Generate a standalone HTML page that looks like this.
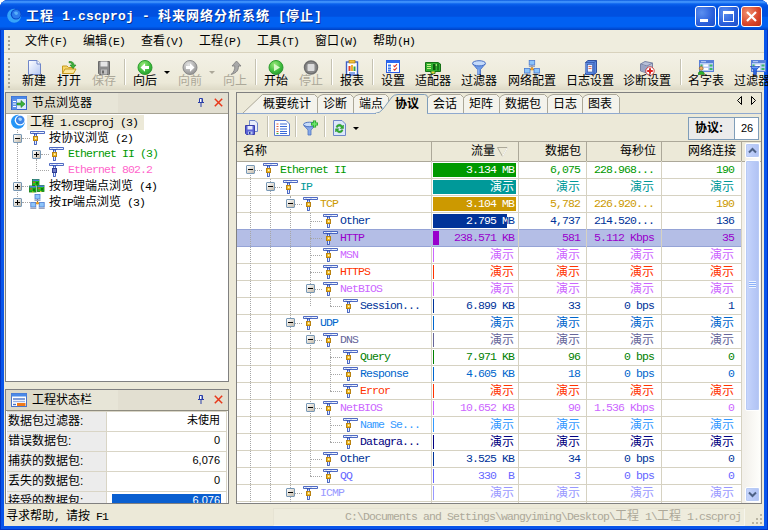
<!DOCTYPE html><html lang="zh"><head><meta charset="utf-8"><title>工程 1.cscproj - 科来网络分析系统 [停止]</title><style>
*{box-sizing:border-box;margin:0;padding:0}
html,body{width:768px;height:530px;overflow:hidden;background:#fff}
body{position:relative;font-family:"Liberation Sans","Noto Sans CJK SC",sans-serif;font-size:12px;color:#000;line-height:1}
.abs{position:absolute}
.m{font-family:"Liberation Mono","Noto Sans CJK SC",monospace;font-size:11.5px;letter-spacing:-0.9px}
.m b,.m span.c{letter-spacing:0}
.c{font-family:"Liberation Sans","Noto Sans CJK SC",sans-serif;font-size:12px;letter-spacing:0}
#win{left:0;top:0;width:768px;height:530px;background:#0855EA;box-shadow:inset 1px 0 0 #0034C4,inset -1px 0 0 #0034C4,inset 0 -1px 0 #0034C4;border-radius:8px 8px 0 0;overflow:hidden}
#title{left:0;top:0;width:768px;height:30px;background:linear-gradient(#0958DF 0,#3D8FFA 5%,#3D8FFA 8%,#0A62EE 13%,#0455E4 20%,#0050E0 24%,#0050E0 54%,#0060F2 58%,#0060F2 88%,#0050DC 94%,#003FBE 100%)}
#ttext{left:26px;top:9px;color:#fff;font-weight:bold;font-size:13px;white-space:pre;text-shadow:1px 1px 0 #0A2F8C;font-family:"Liberation Sans","Noto Sans CJK SC",sans-serif;letter-spacing:1px}
#ttext .l{font-family:"Liberation Mono",monospace;font-size:13px;letter-spacing:0.2px}
.cb{top:6px;width:21px;height:21px;border:1px solid #fff;border-radius:3px;background:radial-gradient(circle at 30% 30%,#5B8FF0,#2A5FDB 60%,#1E4FC8)}
#client{left:4px;top:30px;width:760px;height:496px;background:#ECE9D8}
#menu{left:0;top:0;width:760px;height:23px;background:#EFEDDE;border-bottom:1px solid #D8D2BD}
.mi{top:5px;white-space:pre;font-size:12px}
.grip{width:2px;background-image:repeating-linear-gradient(#A5A292 0,#A5A292 2px,transparent 2px,transparent 4px)}
#tb{left:0;top:23px;width:760px;height:37px;background:linear-gradient(#F3F1E6,#ECE9D8 80%,#DDD9C6)}
.tl{top:22px;white-space:pre;font-size:12px;text-align:center}
.dis{color:#ACA899}
.sep{top:6px;width:2px;height:26px;border-left:1px solid #C5C2B2;border-right:1px solid #fff}
.pane{background:#fff;border:1px solid #808080}
.ph{left:0;top:0;height:20px;background:linear-gradient(90deg,#DDDAC9 0,#DDDAC9 54px,#E7E5D7 54px,#E7E5D7 112px,#E2DFD1 112px,#E2DFD1 100%);width:100%}
.tr{white-space:pre;height:16px;line-height:16px}
.exp{width:9px;height:9px;border:1px solid #7898B5;border-radius:1px;background:linear-gradient(135deg,#fff,#C3BAAA)}
.exp i{position:absolute;left:1px;top:3px;width:5px;height:1px;background:#000}
.exp.p u{position:absolute;left:3px;top:1px;width:1px;height:5px;background:#000}
.dh{border-top:1px dotted #A6A6A6;height:0}
.dv{border-left:1px dotted #A6A6A6;width:0}
.hl{left:0;width:507px;height:1px;background:#D6D2C2}
.vl{top:19px;width:1px;height:343px;background:#D6D2C2}
.cell{white-space:pre;text-align:right;height:16px;line-height:16px}
.hd{top:0;height:20px;background:#ECE9D8;border-right:1px solid #ACA899;border-bottom:1px solid #ACA899;text-align:right;line-height:19px;font-size:12px;padding-right:5px;white-space:pre}
</style></head><body>

<svg width="0" height="0" style="position:absolute">
<defs>
<g id="pi">
 <path d="M0.5 0.5 H14.5 V2.5 H0.5Z" fill="#F0F5FF" stroke="#2446B4" stroke-width="0.8"/>
 <path d="M3 1.5 L5.5 4 L8 1.5" fill="none" stroke="#2446B4" stroke-width="0.7"/>
 <rect x="4.5" y="3" width="2" height="10.5" fill="#E6EEFF" stroke="#2446B4" stroke-width="0.8"/>
 <rect x="3.5" y="5.500" width="4" height="4" fill="#F2BC22" stroke="#B98212"/>
 <rect x="5" y="6.5" width="1.5" height="1.5" fill="#FFF6C8"/>
</g>
<g id="pi2">
 <path d="M0.5 0.5 H14.5 V2.5 H0.5Z" fill="#F0F5FF" stroke="#2446B4" stroke-width="0.8"/>
 <path d="M3 1.5 L5.5 4 L8 1.5" fill="none" stroke="#2446B4" stroke-width="0.7"/>
 <rect x="4.5" y="3" width="2" height="10.5" fill="#E6EEFF" stroke="#2446B4" stroke-width="0.8"/>
 <rect x="3.5" y="5.500" width="4" height="4" fill="#6C79C8" stroke="#2F3C8F"/>
</g>
</defs></svg>

<div id="win" class="abs">
<div id="title" class="abs">
<svg class="abs" style="left:7px;top:8px" width="15" height="15" viewBox="0 0 15 15"><circle cx="7.2" cy="7.8" r="7" fill="#36A4FA"/><circle cx="9" cy="6.3" r="5.300" fill="#0A48C8"/><circle cx="9.2" cy="6.200" r="4.300" fill="#2C7CEC"/><path d="M7 4.500 l1.500 -1 l2 0.500 l0.500 2 l-1.500 1 l-1.500 -0.500z" fill="#58B0FA"/></svg>
<div id="ttext" class="abs">工程<span class="l"> 1.cscproj - </span>科来网络分析系统<span class="l"> [</span>停止<span class="l">]</span></div>
<div class="abs cb" style="left:695px"><div class="abs" style="left:4px;top:12px;width:8px;height:3px;background:#fff"></div></div>
<div class="abs cb" style="left:718px"><div class="abs" style="left:4px;top:4px;width:11px;height:11px;border:1px solid #fff;border-top-width:3px"></div></div>
<div class="abs cb" style="left:741px;background:radial-gradient(circle at 30% 30%,#F09070,#D8452A 60%,#B8301A)"><svg class="abs" style="left:3px;top:3px" width="13" height="13" viewBox="0 0 13 13"><path d="M2 2 L11 11 M11 2 L2 11" stroke="#fff" stroke-width="2.2"/></svg></div>
</div>
<div id="client" class="abs">
<div id="menu" class="abs">
<div class="abs grip" style="left:4px;top:6px;height:15px"></div>
<div class="abs mi" style="left:21px"><span class="c">文件</span><span class="m">(F)</span></div>
<div class="abs mi" style="left:79px"><span class="c">编辑</span><span class="m">(E)</span></div>
<div class="abs mi" style="left:137px"><span class="c">查看</span><span class="m">(V)</span></div>
<div class="abs mi" style="left:195px"><span class="c">工程</span><span class="m">(P)</span></div>
<div class="abs mi" style="left:253px"><span class="c">工具</span><span class="m">(T)</span></div>
<div class="abs mi" style="left:311px"><span class="c">窗口</span><span class="m">(W)</span></div>
<div class="abs mi" style="left:369px"><span class="c">帮助</span><span class="m">(H)</span></div>
</div>
<div id="tb" class="abs">
<div class="abs grip" style="left:4px;top:5px;height:30px"></div>
<svg width="0" height="0" style="position:absolute"><defs>
<linearGradient id="gnew" x1="0" y1="0" x2="1" y2="1"><stop offset="0" stop-color="#fff"/><stop offset="1" stop-color="#B5C8F5"/></linearGradient>
<radialGradient id="ggreen" cx="0.4" cy="0.3" r="0.8"><stop offset="0" stop-color="#9BEA7A"/><stop offset="0.6" stop-color="#3DBB3D"/><stop offset="1" stop-color="#1F8F2F"/></radialGradient>
<radialGradient id="ggrey" cx="0.4" cy="0.3" r="0.8"><stop offset="0" stop-color="#E4E4E4"/><stop offset="0.6" stop-color="#ABABAB"/><stop offset="1" stop-color="#8A8A8A"/></radialGradient>
</defs></svg>
<svg class="abs" style="left:22px;top:7px" width="16" height="16" viewBox="0 0 16 16"><path d="M2.5 0.5 H11 L14.5 4 V14.5 H2.5Z" fill="url(#gnew)" stroke="#6F86C9"/><path d="M11 0.5 V4 H14.5" fill="#fff" stroke="#6F86C9"/></svg>
<div class="abs tl c" style="left:18px;width:24px">新建</div>
<svg class="abs" style="left:57px;top:7px" width="16" height="16" viewBox="0 0 16 16"><path d="M1.5 6 H6 L7.5 7.5 H12.5 V13.5 H1.5Z" fill="#F7D66A" stroke="#C79A1E"/><path d="M1.5 13.5 L4 9 H15 L12.5 13.5Z" fill="#FBE79A" stroke="#C79A1E"/><path d="M8 1.5 C11 1 13 2.5 13 5 H15 L12 8.5 L9 5 H11 C11 3.5 10 2.5 8 2.8Z" fill="#3DB33D" stroke="#1F7F1F" stroke-width="0.6"/></svg>
<div class="abs tl c" style="left:53px;width:24px">打开</div>
<svg class="abs" style="left:92px;top:7px" width="16" height="16" viewBox="0 0 16 16"><path d="M2.5 1.5 H13.5 V14.5 H3.5 L2.5 13.5Z" fill="#8C8C8C" stroke="#6A6A6A"/><rect x="4.5" y="1.5" width="7" height="5" fill="#E6E6E6"/><rect x="5" y="9.5" width="6" height="5" fill="#BDBDBD"/><rect x="6" y="10.5" width="2" height="3" fill="#6A6A6A"/></svg>
<div class="abs tl c dis" style="left:88px;width:24px">保存</div>
<div class="abs sep" style="left:120px"></div>
<svg class="abs" style="left:133px;top:7px" width="16" height="16" viewBox="0 0 16 16"><circle cx="8" cy="7.5" r="7" fill="url(#ggreen)" stroke="#2E9B2E"/><path d="M3.5 7.5 L8 3.3 V6 H12 V9 H8 V11.7Z" fill="#fff"/></svg>
<div class="abs tl c" style="left:129px;width:24px">向后</div>
<div class="abs" style="left:160px;top:18px;width:0;height:0;border:3px solid transparent;border-top:3px solid #000;border-bottom:0"></div>
<svg class="abs" style="left:178px;top:7px" width="16" height="16" viewBox="0 0 16 16"><circle cx="8" cy="7.5" r="7" fill="url(#ggrey)" stroke="#8A8A8A"/><path d="M12.5 7.5 L8 3.3 V6 H4 V9 H8 V11.7Z" fill="#fff"/></svg>
<div class="abs tl c dis" style="left:174px;width:24px">向前</div>
<div class="abs" style="left:205px;top:18px;width:0;height:0;border:3px solid transparent;border-top:3px solid #ACA899;border-bottom:0"></div>
<svg class="abs" style="left:223px;top:7px" width="16" height="16" viewBox="0 0 16 16"><path d="M9.5 1 L14 6 H11.5 C11.5 10 10 13 4 14.5 C7 12 7.8 9.5 7.8 6 H5Z" fill="#A8A8A8" stroke="#7C7C7C" stroke-width="0.8"/></svg>
<div class="abs tl c dis" style="left:219px;width:24px">向上</div>
<div class="abs sep" style="left:251px"></div>
<svg class="abs" style="left:264px;top:7px" width="16" height="16" viewBox="0 0 16 16"><circle cx="8" cy="7.5" r="7" fill="url(#ggreen)" stroke="#2E9B2E"/><path d="M6 3.7 L12 7.5 L6 11.3Z" fill="#D8F8C8"/></svg>
<div class="abs tl c" style="left:260px;width:24px">开始</div>
<svg class="abs" style="left:299px;top:7px" width="16" height="16" viewBox="0 0 16 16"><circle cx="8" cy="7.5" r="6.5" fill="#8A8A8A" stroke="#6E6E6E" stroke-width="1.5"/><rect x="4.5" y="4" width="7" height="7" rx="1" fill="#DCDCDC"/></svg>
<div class="abs tl c dis" style="left:295px;width:24px">停止</div>
<div class="abs sep" style="left:327px"></div>
<svg class="abs" style="left:340px;top:7px" width="16" height="16" viewBox="0 0 16 16"><rect x="2.5" y="2" width="11" height="13" fill="#fff" stroke="#3A5FC8" stroke-width="1.4"/><path d="M5 13 H11" stroke="#3A6FD8" stroke-width="1.2"/><rect x="5" y="0" width="6" height="3" fill="#F2C23A" stroke="#A67A12" stroke-width="0.7"/><rect x="4.5" y="6" width="2" height="5" fill="#E0402A"/><rect x="7" y="5" width="2" height="6" fill="#F0B030"/><rect x="9.5" y="6.500" width="2" height="4.500" fill="#3DA53D"/></svg>
<div class="abs tl c" style="left:336px;width:24px">报表</div>
<div class="abs sep" style="left:368px"></div>
<svg class="abs" style="left:381px;top:7px" width="16" height="16" viewBox="0 0 16 16"><rect x="1.500" y="0.500" width="13" height="12" fill="#fff" stroke="#2A5AE0"/><rect x="1.500" y="0.500" width="13" height="2.500" fill="#2A6AF0"/><rect x="3" y="4.500" width="3" height="2" fill="#3A7AF0"/><rect x="3" y="7.500" width="3" height="2" fill="#3A7AF0"/><rect x="3" y="10" width="3" height="1.500" fill="#3A7AF0"/><path d="M8.500 5.500 l1.200 1.200 l2.300 -2.500 M8.500 9 l1.200 1.200 l2.300 -2.500" stroke="#E03A2A" fill="none" stroke-width="1.100"/></svg>
<div class="abs tl c" style="left:377px;width:24px">设置</div>
<svg class="abs" style="left:421px;top:7px" width="16" height="16" viewBox="0 0 16 16"><path d="M0.500 2.500 H13 L15.500 4 V11.500 H10 V13.500 H6 V11.500 H0.500Z" fill="#2FB02F" stroke="#147014"/><path d="M2 4.500 H6 M2 6.500 H6 M2 8.500 H6" stroke="#C8F088" stroke-width="1.200"/><rect x="8" y="4" width="2.500" height="6" fill="#0E5A0E"/><rect x="12" y="3.500" width="2" height="7" fill="#1A7A1A"/><rect x="6.500" y="11.500" width="3" height="2" fill="#F0D040"/><circle cx="11.300" cy="5" r="0.800" fill="#E8F8A0"/></svg>
<div class="abs tl c" style="left:411px;width:36px">适配器</div>
<svg class="abs" style="left:467px;top:7px" width="16" height="16" viewBox="0 0 16 16"><path d="M1.800 4 L6.500 9.500 V14.500 H9.500 V9.500 L14.200 4Z" fill="#6F9CE8" stroke="#3A64C0" stroke-width="0.800"/><ellipse cx="8" cy="3.300" rx="6.500" ry="2.600" fill="#C4DAFA" stroke="#3A64C0" stroke-width="0.900"/><path d="M7 9.500 V14" stroke="#B8D0F8" stroke-width="0.900"/></svg>
<div class="abs tl c" style="left:457px;width:36px">过滤器</div>
<svg class="abs" style="left:520px;top:7px" width="16" height="16" viewBox="0 0 16 16"><path d="M8 5 V9 L3.500 11 M8 9 L12.500 11" stroke="#404060" fill="none"/><rect x="5.2" y="0.5" width="5.500" height="4.500" fill="#8CC4FA" stroke="#4A7AD0" stroke-width="0.800"/><path d="M4.9 6.3 h6.100" stroke="#9AA4C0" stroke-width="1.400"/><rect x="0.5" y="8.5" width="5.500" height="4.500" fill="#8CC4FA" stroke="#4A7AD0" stroke-width="0.800"/><path d="M0.2 14.3 h6.100" stroke="#9AA4C0" stroke-width="1.400"/><rect x="10" y="8.5" width="5.500" height="4.500" fill="#8CC4FA" stroke="#4A7AD0" stroke-width="0.800"/><path d="M9.7 14.3 h6.100" stroke="#9AA4C0" stroke-width="1.400"/><circle cx="8" cy="8.800" r="1.600" fill="#F0A020"/></svg>
<div class="abs tl c" style="left:504px;width:48px">网络配置</div>
<svg class="abs" style="left:578px;top:7px" width="16" height="16" viewBox="0 0 16 16"><path d="M3.500 2.500 L6 0.500 H14.500 V12.500 L12 14.500 H3.500Z" fill="#5A88E0" stroke="#2F4FA0"/><path d="M12 2.500 L14.500 0.500 M12 2.500 V14.500 M3.500 2.500 H12" stroke="#2F4FA0" fill="none" stroke-width="0.700"/><rect x="5.500" y="4.500" width="5" height="7.500" fill="#EEF4FF" stroke="#2F4FA0" stroke-width="0.600"/><path d="M6.500 6.500 H9.500 M6.500 8.500 H9.500" stroke="#E05030" stroke-width="0.800"/><path d="M2.500 4 h1.500 M2.500 6 h1.500 M2.500 8 h1.500 M2.500 10 h1.500 M2.500 12 h1.500" stroke="#C8D8F8" stroke-width="0.900"/></svg>
<div class="abs tl c" style="left:562px;width:48px">日志设置</div>
<svg class="abs" style="left:635px;top:7px" width="16" height="16" viewBox="0 0 16 16"><path d="M1.5 4 L6 1.5 L13.5 3 V10 L8 13 L1.5 11Z" fill="#B8C0D8" stroke="#7A84A4"/><path d="M1.5 4 L8 6 L13.5 3 M8 6 V13" stroke="#7A84A4" fill="none"/><path d="M2 4.500 L8 6.500 V12.500 L2 10.700Z" fill="#9AA4C4"/><circle cx="11" cy="11" r="4.2" fill="#fff" stroke="#C02020" stroke-width="0.8"/><path d="M11 8.2 V13.8 M8.2 11 H13.8" stroke="#E02020" stroke-width="2"/></svg>
<div class="abs tl c" style="left:619px;width:48px">诊断设置</div>
<div class="abs sep" style="left:676px"></div>
<svg class="abs" style="left:694px;top:7px" width="16" height="16" viewBox="0 0 16 16"><rect x="1.500" y="0.500" width="14" height="11" fill="#B8CCF2" stroke="#5A80D8"/><rect x="1.500" y="0.500" width="14" height="2.500" fill="#5A80D8"/><path d="M3 1.700 H8" stroke="#DCE8FF" stroke-width="0.800"/><rect x="5.500" y="4.500" width="4.500" height="2" fill="#fff"/><rect x="5.500" y="8" width="4.500" height="2" fill="#fff"/><rect x="11.500" y="4.500" width="3" height="2" fill="#3DB86A"/><rect x="11.500" y="8" width="3" height="2" fill="#3DB86A"/><rect x="2.500" y="4.500" width="2" height="2" fill="#3DB86A"/><circle cx="3.200" cy="8.300" r="1.900" fill="#F0B060" stroke="#8A5A20" stroke-width="0.600"/><path d="M0 14.500 C0 10.200 6.400 10.200 6.400 14.500Z" fill="#2DB32D" stroke="#1C6F1C" stroke-width="0.600"/></svg>
<div class="abs tl c" style="left:684px;width:36px">名字表</div>
<svg class="abs" style="left:746px;top:7px" width="16" height="16" viewBox="0 0 16 16"><rect x="1.500" y="0.500" width="14" height="11" fill="#B8CCF2" stroke="#5A80D8"/><rect x="1.500" y="0.500" width="14" height="2.500" fill="#5A80D8"/><path d="M3 1.700 H8" stroke="#DCE8FF" stroke-width="0.800"/><rect x="5.500" y="4.500" width="4.500" height="2" fill="#fff"/><rect x="5.500" y="8" width="4.500" height="2" fill="#fff"/><rect x="11.500" y="4.500" width="3" height="2" fill="#3DB86A"/><rect x="11.500" y="8" width="3" height="2" fill="#3DB86A"/><rect x="2.500" y="4.500" width="2" height="2" fill="#3DB86A"/><path d="M0.500 6.500 H9.500 L6.300 10 V14.500 H3.700 V10Z" fill="#2F6FE8" stroke="#1C3FB0" stroke-width="0.800"/><path d="M1.500 7.200 H8.500" stroke="#9CC0FF" stroke-width="0.900"/></svg>
<div class="abs tl c" style="left:730px;width:36px">过滤器</div>
</div>
<div class="abs pane" style="left:1px;top:62px;width:224px;height:290px">
<div class="abs ph"></div>
<svg class="abs" style="left:5px;top:3px" width="16" height="14" viewBox="0 0 16 14"><rect x="0.5" y="0.5" width="15" height="13" fill="#DDE9FB" stroke="#3A64C8"/><rect x="0.5" y="0.5" width="15" height="2.5" fill="#4A8AE8"/><rect x="1" y="3" width="5" height="10.500" fill="#5F90E8"/><path d="M2 5.5 H5 M2 8 H5 M2 10.5 H5" stroke="#fff"/><path d="M6 7 H10 V4.5 L14 8 L10 11.5 V9 H6Z" fill="#3DB33D" stroke="#1C7F1C" stroke-width="0.6"/></svg>
<div class="abs c" style="left:26px;top:4px;white-space:pre">节点浏览器</div>
<svg class="abs" style="left:191px;top:4px" width="9" height="11" viewBox="0 0 9 11"><path d="M2.5 1.5 H5.5 V5.5 H2.5Z M1 5.500 H7 M4 6 V10" fill="#fff" stroke="#2B3FA8" stroke-width="1"/><path d="M5 2 V5" stroke="#2B3FA8"/></svg>
<svg class="abs" style="left:208px;top:5px" width="9" height="9" viewBox="0 0 9 9"><path d="M0.8 0.8 L8.2 8.2 M8.2 0.8 L0.8 8.2" stroke="#E8381A" stroke-width="1.5"/></svg>
<div class="abs" style="left:21px;top:22px;width:117px;height:15px;background:#ECE9D8"></div>
<svg class="abs" style="left:5px;top:21px" width="15" height="15" viewBox="0 0 15 15"><circle cx="7" cy="7.800" r="7" fill="#2496F8"/><circle cx="9" cy="6.200" r="5.300" fill="#fff"/><circle cx="9.200" cy="6" r="4.300" fill="#3C86E8"/><path d="M7 4.500 l1.500 -1 l2 0.500 l0.500 2 l-1.500 1 l-1.500 -0.500z" fill="#A8D4FA"/></svg>
<div class="abs dv" style="left:11px;top:37px;height:5px"></div>
<div class="abs" style="left:0;top:20px;width:222px;height:1px;background:#A5A293"></div>
<div class="abs tr" style="left:24px;top:21px"><span class="c">工程</span><span class="m"> 1.cscproj (3)</span></div>
<div class="abs dv" style="left:11px;top:50px;height:60px"></div>
<div class="abs dv" style="left:30px;top:66px;height:12px"></div>
<div class="abs dh" style="left:16px;top:45px;width:8px"></div>
<div class="abs dh" style="left:16px;top:93px;width:8px"></div>
<div class="abs dh" style="left:16px;top:109px;width:8px"></div>
<div class="abs dh" style="left:35px;top:61px;width:8px"></div>
<div class="abs dh" style="left:30px;top:77px;width:13px"></div>
<div class="abs exp" style="left:7px;top:41px"><i></i></div>
<svg class="abs" style="left:24px;top:38px" width="15" height="14" viewBox="0 0 15 14"><use href="#pi"/></svg>
<div class="abs tr" style="left:43px;top:37px"><span class="c">按协议浏览</span><span class="m"> (2)</span></div>
<div class="abs exp p" style="left:26px;top:57px"><i></i><u></u></div>
<svg class="abs" style="left:43px;top:54px" width="15" height="14" viewBox="0 0 15 14"><use href="#pi"/></svg>
<div class="abs tr m" style="left:62px;top:53px;color:#009900">Ethernet II (3)</div>
<svg class="abs" style="left:43px;top:70px" width="15" height="14" viewBox="0 0 15 14"><use href="#pi2"/></svg>
<div class="abs tr m" style="left:62px;top:69px;color:#FF66CC">Ethernet 802.2</div>
<div class="abs exp p" style="left:7px;top:89px"><i></i><u></u></div>
<svg class="abs" style="left:23px;top:86px" width="16" height="15" viewBox="0 0 16 15"><rect x="3.5" y="0.5" width="6.500" height="6" fill="#22C022" stroke="#0E7A0E" stroke-width="0.800"/><rect x="3.5" y="0.5" width="6.500" height="1.500" fill="#4A7AE0"/><rect x="4.3" y="2.7" width="1.600" height="1.400" fill="#F04030"/><rect x="7.0" y="3.0" width="2" height="2.500" fill="#0E7A0E"/><rect x="6.0" y="6.1" width="1.500" height="1" fill="#F0E040"/><rect x="0.5" y="7" width="6.500" height="6" fill="#22C022" stroke="#0E7A0E" stroke-width="0.800"/><rect x="0.5" y="7" width="6.500" height="1.500" fill="#4A7AE0"/><rect x="1.3" y="9.2" width="1.600" height="1.400" fill="#F04030"/><rect x="4.0" y="9.5" width="2" height="2.500" fill="#0E7A0E"/><rect x="3.0" y="12.6" width="1.500" height="1" fill="#F0E040"/><rect x="8.5" y="6.5" width="6.500" height="6" fill="#22C022" stroke="#0E7A0E" stroke-width="0.800"/><rect x="8.5" y="6.5" width="6.500" height="1.500" fill="#4A7AE0"/><rect x="9.3" y="8.7" width="1.600" height="1.400" fill="#F04030"/><rect x="12.0" y="9.0" width="2" height="2.500" fill="#0E7A0E"/><rect x="11.0" y="12.1" width="1.500" height="1" fill="#F0E040"/></svg>
<div class="abs tr" style="left:43px;top:85px"><span class="c">按物理端点浏览</span><span class="m"> (4)</span></div>
<div class="abs exp p" style="left:7px;top:105px"><i></i><u></u></div>
<svg class="abs" style="left:24px;top:101px" width="16" height="16" viewBox="0 0 16 16"><path d="M7.500 5 V9 L3.500 11 M7.500 9 L11.500 11" stroke="#404060" fill="none"/><rect x="5" y="0.5" width="5" height="4.500" fill="#8CC4FA" stroke="#4A7AD0" stroke-width="0.800"/><path d="M4.5 6.3 h6" stroke="#9AA4C0" stroke-width="1.400"/><rect x="0.8" y="8.5" width="5" height="4.500" fill="#8CC4FA" stroke="#4A7AD0" stroke-width="0.800"/><path d="M0.30000000000000004 14.3 h6" stroke="#9AA4C0" stroke-width="1.400"/><rect x="9.2" y="8.5" width="5" height="4.500" fill="#8CC4FA" stroke="#4A7AD0" stroke-width="0.800"/><path d="M8.7 14.3 h6" stroke="#9AA4C0" stroke-width="1.400"/><circle cx="7.500" cy="9" r="1.500" fill="#F0A020"/></svg>
<div class="abs tr" style="left:43px;top:101px"><span class="c">按</span><span class="m">IP</span><span class="c">端点浏览</span><span class="m"> (3)</span></div>
</div>
<div class="abs pane" style="left:1px;top:359px;width:224px;height:115px;overflow:hidden">
<div class="abs ph"></div>
<svg class="abs" style="left:5px;top:3px" width="16" height="14" viewBox="0 0 16 14"><rect x="0.5" y="0.5" width="15" height="13" fill="#fff" stroke="#4A74C8"/><rect x="0.5" y="0.5" width="15" height="3" fill="#4A8AE8"/><path d="M2 6 H14" stroke="#4A74C8" stroke-width="1.4"/><path d="M2 8.5 H14" stroke="#9AB4E8" stroke-width="1.4"/><rect x="6" y="10" width="8.5" height="3" fill="#F07A1A"/><path d="M2 11.5 H5" stroke="#4A74C8" stroke-width="1.4"/></svg>
<div class="abs c" style="left:26px;top:4px;white-space:pre">工程状态栏</div>
<svg class="abs" style="left:191px;top:4px" width="9" height="11" viewBox="0 0 9 11"><path d="M2.5 1.5 H5.5 V5.5 H2.5Z M1 5.500 H7 M4 6 V10" fill="#fff" stroke="#2B3FA8" stroke-width="1"/><path d="M5 2 V5" stroke="#2B3FA8"/></svg>
<svg class="abs" style="left:208px;top:5px" width="9" height="9" viewBox="0 0 9 9"><path d="M0.8 0.8 L8.2 8.2 M8.2 0.8 L0.8 8.2" stroke="#E8381A" stroke-width="1.5"/></svg>
<div class="abs" style="left:0;top:20px;width:222px;height:95px;background:#fff"></div><div class="abs" style="left:0;top:20px;width:222px;height:1px;background:#8F8C7F"></div><div class="abs" style="left:1px;top:21px;width:220px;height:95px;background:#D9D5C6"></div>
<div class="abs" style="left:1px;top:22px;width:99px;height:19px;background:#ECECEC"></div>
<div class="abs c" style="left:2px;top:25px;white-space:pre">数据包过滤器<span style="font-family:'Liberation Sans',sans-serif">:</span></div>
<div class="abs" style="left:101px;top:22px;width:119px;height:19px;background:#fff"></div>
<div class="abs" style="left:101px;top:25px;width:113px;text-align:right;white-space:pre;color:#000;font-size:11px;font-family:'Liberation Sans','Noto Sans CJK SC',sans-serif">未使用</div>
<div class="abs" style="left:1px;top:42px;width:99px;height:19px;background:#ECECEC"></div>
<div class="abs c" style="left:2px;top:45px;white-space:pre">错误数据包<span style="font-family:'Liberation Sans',sans-serif">:</span></div>
<div class="abs" style="left:101px;top:42px;width:119px;height:19px;background:#fff"></div>
<div class="abs" style="left:101px;top:45px;width:113px;text-align:right;white-space:pre;color:#000;font-size:11px;font-family:'Liberation Sans','Noto Sans CJK SC',sans-serif">0</div>
<div class="abs" style="left:1px;top:62px;width:99px;height:19px;background:#ECECEC"></div>
<div class="abs c" style="left:2px;top:65px;white-space:pre">捕获的数据包<span style="font-family:'Liberation Sans',sans-serif">:</span></div>
<div class="abs" style="left:101px;top:62px;width:119px;height:19px;background:#fff"></div>
<div class="abs" style="left:101px;top:65px;width:113px;text-align:right;white-space:pre;color:#000;font-size:11px;font-family:'Liberation Sans','Noto Sans CJK SC',sans-serif">6,076</div>
<div class="abs" style="left:1px;top:82px;width:99px;height:19px;background:#ECECEC"></div>
<div class="abs c" style="left:2px;top:85px;white-space:pre">丢失的数据包<span style="font-family:'Liberation Sans',sans-serif">:</span></div>
<div class="abs" style="left:101px;top:82px;width:119px;height:19px;background:#fff"></div>
<div class="abs" style="left:101px;top:85px;width:113px;text-align:right;white-space:pre;color:#000;font-size:11px;font-family:'Liberation Sans','Noto Sans CJK SC',sans-serif">0</div>
<div class="abs" style="left:1px;top:102px;width:99px;height:19px;background:#ECECEC"></div>
<div class="abs c" style="left:2px;top:105px;white-space:pre">接受的数据包<span style="font-family:'Liberation Sans',sans-serif">:</span></div>
<div class="abs" style="left:101px;top:102px;width:119px;height:19px;background:#fff"></div>
<div class="abs" style="left:106px;top:104px;width:109px;height:17px;background:#0A5FD0"></div>
<div class="abs" style="left:101px;top:105px;width:113px;text-align:right;white-space:pre;color:#fff;font-size:11px;font-family:'Liberation Sans','Noto Sans CJK SC',sans-serif">6,076</div>
</div>
<div class="abs pane" style="left:232px;top:62px;width:526px;height:412px;background:#ECE9D8;overflow:hidden">
<div class="abs" style="left:0;top:20px;width:524px;height:1px;background:#7F9DB9"></div>
<svg class="abs" style="left:0;top:0" width="524" height="22" viewBox="0 0 524 22">
<path d="M5.5 20.5 L25.5 1.5 H77.5 L80.5 4.5 V20.5Z" fill="#F4F3EC" stroke="#ACA899"/>
<path d="M80.5 20.5 V5.5 Q82 2 86 1.5 H113.5 L116.5 4.5 V20.5Z" fill="#F4F3EC" stroke="#ACA899"/>
<path d="M116.5 20.5 V5.5 Q118 2 122 1.5 H148.5 L151.5 4.5 V20.5Z" fill="#F4F3EC" stroke="#ACA899"/>
<path d="M190.5 20.5 V5.5 Q192 2 196 1.5 H223.5 L226.5 4.5 V20.5Z" fill="#F4F3EC" stroke="#ACA899"/>
<path d="M226.5 20.5 V5.5 Q228 2 232 1.5 H259.5 L262.5 4.5 V20.5Z" fill="#F4F3EC" stroke="#ACA899"/>
<path d="M262.5 20.5 V5.5 Q264 2 268 1.5 H307.5 L310.5 4.5 V20.5Z" fill="#F4F3EC" stroke="#ACA899"/>
<path d="M310.5 20.5 V5.5 Q312 2 316 1.5 H342.5 L345.5 4.5 V20.5Z" fill="#F4F3EC" stroke="#ACA899"/>
<path d="M345.5 20.5 V5.5 Q347 2 351 1.5 H379.5 L382.5 4.5 V20.5Z" fill="#F4F3EC" stroke="#ACA899"/>
<path d="M0 20.5 H524" stroke="#8FA9CF"/>
<path d="M138 20.5 Q143 20 146 16 L155 4 Q157 1.5 161 1.5 H187.5 Q190.5 1.5 190.5 4.5 V20.5" fill="#ECE9D8" stroke="#7F9DB9"/>
<rect x="139" y="20" width="51" height="2" fill="#ECE9D8"/>
<path d="M504.5 3.5 V11.5 L500.5 7.5Z M514.500 3.5 V11.5 L518.500 7.5Z" fill="none" stroke="#000" stroke-width="1"/>
</svg>
<div class="abs c" style="left:26px;top:5px;white-space:pre">概要统计</div>
<div class="abs c" style="left:86px;top:5px;white-space:pre">诊断</div>
<div class="abs c" style="left:122px;top:5px;white-space:pre">端点</div>
<div class="abs c" style="left:196px;top:5px;white-space:pre">会话</div>
<div class="abs c" style="left:232px;top:5px;white-space:pre">矩阵</div>
<div class="abs c" style="left:268px;top:5px;white-space:pre">数据包</div>
<div class="abs c" style="left:316px;top:5px;white-space:pre">日志</div>
<div class="abs c" style="left:351px;top:5px;white-space:pre">图表</div>
<div class="abs c" style="left:158px;top:5px;white-space:pre;font-weight:bold">协议</div>
<svg class="abs" style="left:7px;top:27px" width="16" height="16" viewBox="0 0 16 16"><path d="M5.5 0.5 H11 L13.500 3 V11.500 H5.5Z" fill="#E8EEFC" stroke="#6F86C9"/><path d="M1.5 5.500 H10.500 V14.500 H2.500 L1.5 13.500Z" fill="#5B63D6" stroke="#3A3FA8"/><rect x="3.500" y="6" width="5" height="3.500" fill="#E6ECFA"/><rect x="4" y="11.500" width="4.500" height="3" fill="#B8C4EE"/><rect x="5" y="12" width="1.500" height="2" fill="#2A3F98"/></svg>
<svg class="abs" style="left:37px;top:27px" width="16" height="16" viewBox="0 0 16 16"><path d="M0.500 0.500 H12 L15.500 4 V15.500 H0.500Z" fill="#fff" stroke="#5A7ACF"/><path d="M2.500 4 H4.500 M2.500 6.500 H4.500 M2.500 9 H4.500 M2.500 11.500 H4.500" stroke="#E0603A" stroke-width="1.200"/><path d="M2.500 13.500 H4.500" stroke="#3DA53D" stroke-width="1.200"/><path d="M6 4 H13 M6 6.500 H13 M6 9 H13 M6 11.500 H13 M6 13.500 H13" stroke="#3A6AD8" stroke-width="1.200"/></svg>
<svg class="abs" style="left:66px;top:27px" width="16" height="16" viewBox="0 0 16 16"><ellipse cx="6.500" cy="4.500" rx="6" ry="2.300" fill="#C8DCF8" stroke="#4F74C0"/><path d="M0.800 5.500 L5 10 V15 H8 V10 L12.200 5.500 C10 7.300 3 7.300 0.800 5.500Z" fill="#86A8E8" stroke="#4F74C0" stroke-width="0.800"/><path d="M11.500 0.500 V7.500 M8 4 H15" stroke="#22A022" stroke-width="3.200"/><path d="M11.500 1.200 V6.800 M8.700 4 H14.300" stroke="#6FE86F" stroke-width="1.600"/></svg>
<svg class="abs" style="left:95px;top:27px" width="16" height="16" viewBox="0 0 16 16"><path d="M1.500 0.500 H10 L13.500 4 V15.500 H1.500Z" fill="#DCE8FA" stroke="#6F86C9"/><path d="M4 7 A3.500 3.500 0 0 1 10.500 6 L11.500 5 V8.500 H8 L9.200 7.300 A2 2 0 0 0 5.500 7.500Z M11 10 A3.500 3.500 0 0 1 4.500 11 L3.500 12 V8.800 H7 L5.800 10 A2 2 0 0 0 9.500 9.700Z" fill="#2FAF2F" stroke="#1C7F1C" stroke-width="0.400"/></svg>
<div class="abs" style="left:30px;top:23px;width:2px;height:21px;border-left:1px solid #C5C2B2;border-right:1px solid #fff"></div>
<div class="abs" style="left:58px;top:23px;width:2px;height:21px;border-left:1px solid #C5C2B2;border-right:1px solid #fff"></div>
<div class="abs" style="left:87px;top:23px;width:2px;height:21px;border-left:1px solid #C5C2B2;border-right:1px solid #fff"></div>
<div class="abs" style="left:116px;top:34px;width:0;height:0;border:3px solid transparent;border-top:3px solid #000;border-bottom:0"></div>
<div class="abs" style="left:451px;top:24px;width:71px;height:23px;border:1px solid #7F9DB9;background:#fff"><div class="abs" style="left:0;top:0;width:46px;height:21px;background:#EBEBEB;border-right:1px solid #7F9DB9"></div><div class="abs c" style="left:6px;top:4px;font-weight:bold;white-space:pre">协议:</div><div class="abs" style="left:52px;top:5px;font-size:11px">26</div></div>
<div class="abs" style="left:0;top:48px;width:524px;height:362px;background:#fff;border-top:1px solid #ACA899">
<div class="abs hd c" style="left:0px;width:195px;text-align:left;padding-left:6px">名称</div>
<div class="abs hd c" style="left:195px;width:87px;padding-right:23px">流量</div>
<svg class="abs" style="left:260px;top:5px" width="11" height="10" viewBox="0 0 11 10"><path d="M0.5 0.5 H10.5 L5.5 9.5Z" fill="#ECE9D8" stroke="#ACA899"/><path d="M10.5 0.5 L5.5 9.5" stroke="#fff"/></svg>
<div class="abs hd c" style="left:282px;width:68px">数据包</div>
<div class="abs hd c" style="left:350px;width:75px">每秒位</div>
<div class="abs hd c" style="left:425px;width:80px">网络连接</div>
<div class="abs hd" style="left:505px;width:19px;border-right:0"></div>
<div class="abs hl" style="top:36px"></div>
<div class="abs hl" style="top:53px"></div>
<div class="abs hl" style="top:70px"></div>
<div class="abs hl" style="top:87px"></div>
<div class="abs" style="left:0;top:87px;width:505px;height:18px;background:#B4BEE6;border-top:1px solid #95A3D6;border-bottom:1px solid #95A3D6"></div>
<div class="abs hl" style="top:121px"></div>
<div class="abs hl" style="top:138px"></div>
<div class="abs hl" style="top:155px"></div>
<div class="abs hl" style="top:172px"></div>
<div class="abs hl" style="top:189px"></div>
<div class="abs hl" style="top:206px"></div>
<div class="abs hl" style="top:223px"></div>
<div class="abs hl" style="top:240px"></div>
<div class="abs hl" style="top:257px"></div>
<div class="abs hl" style="top:274px"></div>
<div class="abs hl" style="top:291px"></div>
<div class="abs hl" style="top:308px"></div>
<div class="abs hl" style="top:325px"></div>
<div class="abs hl" style="top:342px"></div>
<div class="abs hl" style="top:359px"></div>
<div class="abs vl" style="left:194px"></div>
<div class="abs vl" style="left:281px"></div>
<div class="abs vl" style="left:349px"></div>
<div class="abs vl" style="left:424px"></div>
<div class="abs vl" style="left:504px"></div>
<div class="abs" style="left:194px;top:88px;width:1px;height:16px;background:#B4BEE6"></div>
<div class="abs dv" style="left:13px;top:33px;height:329px"></div>
<div class="abs dv" style="left:33px;top:37px;height:325px"></div>
<div class="abs dv" style="left:53px;top:54px;height:308px"></div>
<div class="abs dv" style="left:73px;top:71px;height:93px"></div>
<div class="abs dv" style="left:73px;top:190px;height:144px"></div>
<div class="abs dv" style="left:93px;top:156px;height:8px"></div>
<div class="abs dv" style="left:93px;top:207px;height:42px"></div>
<div class="abs dv" style="left:93px;top:275px;height:25px"></div>
<div class="abs dh" style="left:18px;top:28px;width:7px"></div>
<div class="abs exp" style="left:9px;top:23px"><i></i></div>
<svg class="abs" style="left:26px;top:21px" width="15" height="14" viewBox="0 0 15 14"><use href="#pi"/></svg>
<div class="abs cell m" style="left:43px;top:20px;text-align:left;color:#009900">Ethernet II</div>
<div class="abs cell m" style="left:196px;top:20px;width:81px;color:#009900">3.134 MB</div>
<div class="abs" style="left:196px;top:21px;width:83px;height:14px;background:#009900;overflow:hidden"><div class="abs cell m" style="left:0;top:-1px;width:81px;color:#fff">3.134 MB</div></div>
<div class="abs cell m" style="left:282px;top:20px;width:61px;color:#009900">6,075</div>
<div class="abs cell m" style="left:350px;top:20px;width:67px;color:#009900">228.968...</div>
<div class="abs cell m" style="left:425px;top:20px;width:72px;color:#009900">190</div>
<div class="abs dh" style="left:38px;top:45px;width:7px"></div>
<div class="abs exp" style="left:29px;top:40px"><i></i></div>
<svg class="abs" style="left:46px;top:38px" width="15" height="14" viewBox="0 0 15 14"><use href="#pi"/></svg>
<div class="abs cell m" style="left:63px;top:37px;text-align:left;color:#009999">IP</div>
<div class="abs cell m" style="left:196px;top:37px;width:81px;color:#009999"><span class="c">演示</span></div>
<div class="abs" style="left:196px;top:38px;width:83px;height:14px;background:#009999;overflow:hidden"><div class="abs cell m" style="left:0;top:-1px;width:81px;color:#fff"><span class="c">演示</span></div></div>
<div class="abs cell m" style="left:282px;top:37px;width:61px;color:#009999"><span class="c">演示</span></div>
<div class="abs cell m" style="left:350px;top:37px;width:67px;color:#009999"><span class="c">演示</span></div>
<div class="abs cell m" style="left:425px;top:37px;width:72px;color:#009999"><span class="c">演示</span></div>
<div class="abs dh" style="left:58px;top:62px;width:7px"></div>
<div class="abs exp" style="left:49px;top:57px"><i></i></div>
<svg class="abs" style="left:66px;top:55px" width="15" height="14" viewBox="0 0 15 14"><use href="#pi"/></svg>
<div class="abs cell m" style="left:83px;top:54px;text-align:left;color:#CC9900">TCP</div>
<div class="abs cell m" style="left:196px;top:54px;width:81px;color:#CC9900">3.104 MB</div>
<div class="abs" style="left:196px;top:55px;width:83px;height:14px;background:#CC9900;overflow:hidden"><div class="abs cell m" style="left:0;top:-1px;width:81px;color:#fff">3.104 MB</div></div>
<div class="abs cell m" style="left:282px;top:54px;width:61px;color:#CC9900">5,782</div>
<div class="abs cell m" style="left:350px;top:54px;width:67px;color:#CC9900">226.920...</div>
<div class="abs cell m" style="left:425px;top:54px;width:72px;color:#CC9900">190</div>
<div class="abs dh" style="left:73px;top:79px;width:12px"></div>
<svg class="abs" style="left:86px;top:72px" width="15" height="14" viewBox="0 0 15 14"><use href="#pi"/></svg>
<div class="abs cell m" style="left:103px;top:71px;text-align:left;color:#003399">Other</div>
<div class="abs cell m" style="left:196px;top:71px;width:81px;color:#003399">2.795 MB</div>
<div class="abs" style="left:196px;top:72px;width:74px;height:14px;background:#003399;overflow:hidden"><div class="abs cell m" style="left:0;top:-1px;width:81px;color:#fff">2.795 MB</div></div>
<div class="abs cell m" style="left:282px;top:71px;width:61px;color:#003399">4,737</div>
<div class="abs cell m" style="left:350px;top:71px;width:67px;color:#003399">214.520...</div>
<div class="abs cell m" style="left:425px;top:71px;width:72px;color:#003399">136</div>
<div class="abs dh" style="left:73px;top:96px;width:12px"></div>
<svg class="abs" style="left:86px;top:89px" width="15" height="14" viewBox="0 0 15 14"><use href="#pi"/></svg>
<div class="abs cell m" style="left:103px;top:88px;text-align:left;color:#9900CC">HTTP</div>
<div class="abs" style="left:196px;top:89px;width:6px;height:14px;background:#9900CC"></div>
<div class="abs cell m" style="left:196px;top:88px;width:81px;color:#9900CC">238.571 KB</div>
<div class="abs cell m" style="left:282px;top:88px;width:61px;color:#9900CC">581</div>
<div class="abs cell m" style="left:350px;top:88px;width:67px;color:#9900CC">5.112 Kbps</div>
<div class="abs cell m" style="left:425px;top:88px;width:72px;color:#9900CC">35</div>
<div class="abs dh" style="left:73px;top:113px;width:12px"></div>
<svg class="abs" style="left:86px;top:106px" width="15" height="14" viewBox="0 0 15 14"><use href="#pi"/></svg>
<div class="abs cell m" style="left:103px;top:105px;text-align:left;color:#CC66FF">MSN</div>
<div class="abs" style="left:196px;top:106px;width:1px;height:14px;background:#CC66FF"></div>
<div class="abs cell m" style="left:196px;top:105px;width:81px;color:#CC66FF"><span class="c">演示</span></div>
<div class="abs cell m" style="left:282px;top:105px;width:61px;color:#CC66FF"><span class="c">演示</span></div>
<div class="abs cell m" style="left:350px;top:105px;width:67px;color:#CC66FF"><span class="c">演示</span></div>
<div class="abs cell m" style="left:425px;top:105px;width:72px;color:#CC66FF"><span class="c">演示</span></div>
<div class="abs dh" style="left:73px;top:130px;width:12px"></div>
<svg class="abs" style="left:86px;top:123px" width="15" height="14" viewBox="0 0 15 14"><use href="#pi"/></svg>
<div class="abs cell m" style="left:103px;top:122px;text-align:left;color:#FF3300">HTTPS</div>
<div class="abs" style="left:196px;top:123px;width:1px;height:14px;background:#FF3300"></div>
<div class="abs cell m" style="left:196px;top:122px;width:81px;color:#FF3300"><span class="c">演示</span></div>
<div class="abs cell m" style="left:282px;top:122px;width:61px;color:#FF3300"><span class="c">演示</span></div>
<div class="abs cell m" style="left:350px;top:122px;width:67px;color:#FF3300"><span class="c">演示</span></div>
<div class="abs cell m" style="left:425px;top:122px;width:72px;color:#FF3300"><span class="c">演示</span></div>
<div class="abs dh" style="left:78px;top:147px;width:7px"></div>
<div class="abs exp" style="left:69px;top:142px"><i></i></div>
<svg class="abs" style="left:86px;top:140px" width="15" height="14" viewBox="0 0 15 14"><use href="#pi"/></svg>
<div class="abs cell m" style="left:103px;top:139px;text-align:left;color:#CC66FF">NetBIOS</div>
<div class="abs" style="left:196px;top:140px;width:1px;height:14px;background:#CC66FF"></div>
<div class="abs cell m" style="left:196px;top:139px;width:81px;color:#CC66FF"><span class="c">演示</span></div>
<div class="abs cell m" style="left:282px;top:139px;width:61px;color:#CC66FF"><span class="c">演示</span></div>
<div class="abs cell m" style="left:350px;top:139px;width:67px;color:#CC66FF"><span class="c">演示</span></div>
<div class="abs cell m" style="left:425px;top:139px;width:72px;color:#CC66FF"><span class="c">演示</span></div>
<div class="abs dh" style="left:93px;top:164px;width:12px"></div>
<svg class="abs" style="left:106px;top:157px" width="15" height="14" viewBox="0 0 15 14"><use href="#pi"/></svg>
<div class="abs cell m" style="left:123px;top:156px;text-align:left;color:#003399">Session...</div>
<div class="abs" style="left:196px;top:157px;width:1px;height:14px;background:#003399"></div>
<div class="abs cell m" style="left:196px;top:156px;width:81px;color:#003399">6.899 KB</div>
<div class="abs cell m" style="left:282px;top:156px;width:61px;color:#003399">33</div>
<div class="abs cell m" style="left:350px;top:156px;width:67px;color:#003399">0 bps</div>
<div class="abs cell m" style="left:425px;top:156px;width:72px;color:#003399">1</div>
<div class="abs dh" style="left:58px;top:181px;width:7px"></div>
<div class="abs exp" style="left:49px;top:176px"><i></i></div>
<svg class="abs" style="left:66px;top:174px" width="15" height="14" viewBox="0 0 15 14"><use href="#pi"/></svg>
<div class="abs cell m" style="left:83px;top:173px;text-align:left;color:#0066CC">UDP</div>
<div class="abs" style="left:196px;top:174px;width:1px;height:14px;background:#0066CC"></div>
<div class="abs cell m" style="left:196px;top:173px;width:81px;color:#0066CC"><span class="c">演示</span></div>
<div class="abs cell m" style="left:282px;top:173px;width:61px;color:#0066CC"><span class="c">演示</span></div>
<div class="abs cell m" style="left:350px;top:173px;width:67px;color:#0066CC"><span class="c">演示</span></div>
<div class="abs cell m" style="left:425px;top:173px;width:72px;color:#0066CC"><span class="c">演示</span></div>
<div class="abs dh" style="left:78px;top:198px;width:7px"></div>
<div class="abs exp" style="left:69px;top:193px"><i></i></div>
<svg class="abs" style="left:86px;top:191px" width="15" height="14" viewBox="0 0 15 14"><use href="#pi"/></svg>
<div class="abs cell m" style="left:103px;top:190px;text-align:left;color:#666699">DNS</div>
<div class="abs" style="left:196px;top:191px;width:1px;height:14px;background:#666699"></div>
<div class="abs cell m" style="left:196px;top:190px;width:81px;color:#666699"><span class="c">演示</span></div>
<div class="abs cell m" style="left:282px;top:190px;width:61px;color:#666699"><span class="c">演示</span></div>
<div class="abs cell m" style="left:350px;top:190px;width:67px;color:#666699"><span class="c">演示</span></div>
<div class="abs cell m" style="left:425px;top:190px;width:72px;color:#666699"><span class="c">演示</span></div>
<div class="abs dh" style="left:93px;top:215px;width:12px"></div>
<svg class="abs" style="left:106px;top:208px" width="15" height="14" viewBox="0 0 15 14"><use href="#pi"/></svg>
<div class="abs cell m" style="left:123px;top:207px;text-align:left;color:#008000">Query</div>
<div class="abs" style="left:196px;top:208px;width:1px;height:14px;background:#008000"></div>
<div class="abs cell m" style="left:196px;top:207px;width:81px;color:#008000">7.971 KB</div>
<div class="abs cell m" style="left:282px;top:207px;width:61px;color:#008000">96</div>
<div class="abs cell m" style="left:350px;top:207px;width:67px;color:#008000">0 bps</div>
<div class="abs cell m" style="left:425px;top:207px;width:72px;color:#008000">0</div>
<div class="abs dh" style="left:93px;top:232px;width:12px"></div>
<svg class="abs" style="left:106px;top:225px" width="15" height="14" viewBox="0 0 15 14"><use href="#pi"/></svg>
<div class="abs cell m" style="left:123px;top:224px;text-align:left;color:#0066CC">Response</div>
<div class="abs" style="left:196px;top:225px;width:1px;height:14px;background:#0066CC"></div>
<div class="abs cell m" style="left:196px;top:224px;width:81px;color:#0066CC">4.605 KB</div>
<div class="abs cell m" style="left:282px;top:224px;width:61px;color:#0066CC">18</div>
<div class="abs cell m" style="left:350px;top:224px;width:67px;color:#0066CC">0 bps</div>
<div class="abs cell m" style="left:425px;top:224px;width:72px;color:#0066CC">0</div>
<div class="abs dh" style="left:93px;top:249px;width:12px"></div>
<svg class="abs" style="left:106px;top:242px" width="15" height="14" viewBox="0 0 15 14"><use href="#pi"/></svg>
<div class="abs cell m" style="left:123px;top:241px;text-align:left;color:#FF3300">Error</div>
<div class="abs" style="left:196px;top:242px;width:1px;height:14px;background:#FF3300"></div>
<div class="abs cell m" style="left:196px;top:241px;width:81px;color:#FF3300"><span class="c">演示</span></div>
<div class="abs cell m" style="left:282px;top:241px;width:61px;color:#FF3300"><span class="c">演示</span></div>
<div class="abs cell m" style="left:350px;top:241px;width:67px;color:#FF3300"><span class="c">演示</span></div>
<div class="abs cell m" style="left:425px;top:241px;width:72px;color:#FF3300"><span class="c">演示</span></div>
<div class="abs dh" style="left:78px;top:266px;width:7px"></div>
<div class="abs exp" style="left:69px;top:261px"><i></i></div>
<svg class="abs" style="left:86px;top:259px" width="15" height="14" viewBox="0 0 15 14"><use href="#pi"/></svg>
<div class="abs cell m" style="left:103px;top:258px;text-align:left;color:#CC66FF">NetBIOS</div>
<div class="abs" style="left:196px;top:259px;width:1px;height:14px;background:#CC66FF"></div>
<div class="abs cell m" style="left:196px;top:258px;width:81px;color:#CC66FF">10.652 KB</div>
<div class="abs cell m" style="left:282px;top:258px;width:61px;color:#CC66FF">90</div>
<div class="abs cell m" style="left:350px;top:258px;width:67px;color:#CC66FF">1.536 Kbps</div>
<div class="abs cell m" style="left:425px;top:258px;width:72px;color:#CC66FF">0</div>
<div class="abs dh" style="left:93px;top:283px;width:12px"></div>
<svg class="abs" style="left:106px;top:276px" width="15" height="14" viewBox="0 0 15 14"><use href="#pi"/></svg>
<div class="abs cell m" style="left:123px;top:275px;text-align:left;color:#3399FF">Name Se...</div>
<div class="abs" style="left:196px;top:276px;width:1px;height:14px;background:#3399FF"></div>
<div class="abs cell m" style="left:196px;top:275px;width:81px;color:#3399FF"><span class="c">演示</span></div>
<div class="abs cell m" style="left:282px;top:275px;width:61px;color:#3399FF"><span class="c">演示</span></div>
<div class="abs cell m" style="left:350px;top:275px;width:67px;color:#3399FF"><span class="c">演示</span></div>
<div class="abs cell m" style="left:425px;top:275px;width:72px;color:#3399FF"><span class="c">演示</span></div>
<div class="abs dh" style="left:93px;top:300px;width:12px"></div>
<svg class="abs" style="left:106px;top:293px" width="15" height="14" viewBox="0 0 15 14"><use href="#pi"/></svg>
<div class="abs cell m" style="left:123px;top:292px;text-align:left;color:#000080">Datagra...</div>
<div class="abs" style="left:196px;top:293px;width:1px;height:14px;background:#000080"></div>
<div class="abs cell m" style="left:196px;top:292px;width:81px;color:#000080"><span class="c">演示</span></div>
<div class="abs cell m" style="left:282px;top:292px;width:61px;color:#000080"><span class="c">演示</span></div>
<div class="abs cell m" style="left:350px;top:292px;width:67px;color:#000080"><span class="c">演示</span></div>
<div class="abs cell m" style="left:425px;top:292px;width:72px;color:#000080"><span class="c">演示</span></div>
<div class="abs dh" style="left:73px;top:317px;width:12px"></div>
<svg class="abs" style="left:86px;top:310px" width="15" height="14" viewBox="0 0 15 14"><use href="#pi"/></svg>
<div class="abs cell m" style="left:103px;top:309px;text-align:left;color:#003399">Other</div>
<div class="abs" style="left:196px;top:310px;width:1px;height:14px;background:#003399"></div>
<div class="abs cell m" style="left:196px;top:309px;width:81px;color:#003399">3.525 KB</div>
<div class="abs cell m" style="left:282px;top:309px;width:61px;color:#003399">34</div>
<div class="abs cell m" style="left:350px;top:309px;width:67px;color:#003399">0 bps</div>
<div class="abs cell m" style="left:425px;top:309px;width:72px;color:#003399">0</div>
<div class="abs dh" style="left:73px;top:334px;width:12px"></div>
<svg class="abs" style="left:86px;top:327px" width="15" height="14" viewBox="0 0 15 14"><use href="#pi"/></svg>
<div class="abs cell m" style="left:103px;top:326px;text-align:left;color:#6666FF">QQ</div>
<div class="abs" style="left:196px;top:327px;width:1px;height:14px;background:#6666FF"></div>
<div class="abs cell m" style="left:196px;top:326px;width:81px;color:#6666FF">330  B</div>
<div class="abs cell m" style="left:282px;top:326px;width:61px;color:#6666FF">3</div>
<div class="abs cell m" style="left:350px;top:326px;width:67px;color:#6666FF">0 bps</div>
<div class="abs cell m" style="left:425px;top:326px;width:72px;color:#6666FF">0</div>
<div class="abs dh" style="left:58px;top:351px;width:7px"></div>
<div class="abs exp" style="left:49px;top:346px"><i></i></div>
<svg class="abs" style="left:66px;top:344px" width="15" height="14" viewBox="0 0 15 14"><use href="#pi"/></svg>
<div class="abs cell m" style="left:83px;top:343px;text-align:left;color:#9999FF">ICMP</div>
<div class="abs" style="left:196px;top:344px;width:1px;height:14px;background:#9999FF"></div>
<div class="abs cell m" style="left:196px;top:343px;width:81px;color:#9999FF"><span class="c">演示</span></div>
<div class="abs cell m" style="left:282px;top:343px;width:61px;color:#9999FF"><span class="c">演示</span></div>
<div class="abs cell m" style="left:350px;top:343px;width:67px;color:#9999FF"><span class="c">演示</span></div>
<div class="abs cell m" style="left:425px;top:343px;width:72px;color:#9999FF"><span class="c">演示</span></div>
<div class="abs" style="left:505px;top:0;width:19px;height:362px;background:#F3F1EC"></div>
<div class="abs" style="left:505px;top:0;width:19px;height:20px;background:#ECE9D8;border-bottom:1px solid #ACA899"></div>
<div class="abs" style="left:508px;top:1px;width:15px;height:360px;background:linear-gradient(90deg,#F3F1EC,#FEFEFB)"></div>
<div class="abs" style="left:508px;top:1px;width:15px;height:15px;background:linear-gradient(90deg,#C9D7FC,#BACBF8 50%,#B0C2F3);border:1px solid #fff;border-radius:2px;box-shadow:0 0 0 1px #B7CAF5 inset"><svg class="abs" style="left:2px;top:3px" width="9" height="7" viewBox="0 0 9 7"><path d="M1 5.5 L4.5 2 L8 5.5" fill="none" stroke="#4D6185" stroke-width="2"/></svg></div>
<div class="abs" style="left:508px;top:18px;width:15px;height:251px;background:linear-gradient(90deg,#C9D7FC,#BACBF8 50%,#B0C2F3);border:1px solid #fff;border-radius:2px;box-shadow:0 0 0 1px #B7CAF5 inset"><div class="abs" style="left:3px;top:120px;width:7px;height:7px;background:repeating-linear-gradient(#EEF4FE 0,#EEF4FE 1px,#8CB0F8 1px,#8CB0F8 2px)"></div></div>
<div class="abs" style="left:508px;top:345px;width:15px;height:15px;background:linear-gradient(90deg,#C9D7FC,#BACBF8 50%,#B0C2F3);border:1px solid #fff;border-radius:2px;box-shadow:0 0 0 1px #B7CAF5 inset"><svg class="abs" style="left:2px;top:3px" width="9" height="7" viewBox="0 0 9 7"><path d="M1 1.5 L4.5 5 L8 1.5" fill="none" stroke="#4D6185" stroke-width="2"/></svg></div>
</div>
</div>
<div class="abs" style="left:0;top:474px;width:760px;height:22px;background:#ECE9D8">
<div class="abs c" style="left:2px;top:6px;white-space:pre">寻求帮助<span class="m">, </span>请按<span class="m"> F1</span></div>
<div class="abs" style="left:269px;top:4px;width:472px;height:18px;background:#EEECDD;border:1px solid #E6E3D3;border-right-color:#F6F5EC;border-bottom-color:#F6F5EC"></div>
<div class="abs m" style="left:119px;top:6px;width:618px;text-align:right;white-space:pre;color:#ACA899">C:\Documents and Settings\wangyiming\Desktop\<span class="c">工程</span> 1\<span class="c">工程</span> 1.cscproj</div>
<svg class="abs" style="left:746px;top:8px" width="12" height="12" viewBox="0 0 12 12"><path d="M10 2 h2v2h-2z M6 6 h2v2h-2z M10 6 h2v2h-2z M2 10 h2v2h-2z M6 10 h2v2h-2z M10 10 h2v2h-2z" fill="#B8B4A2"/></svg>
</div>
</div>
</div>
</body></html>
